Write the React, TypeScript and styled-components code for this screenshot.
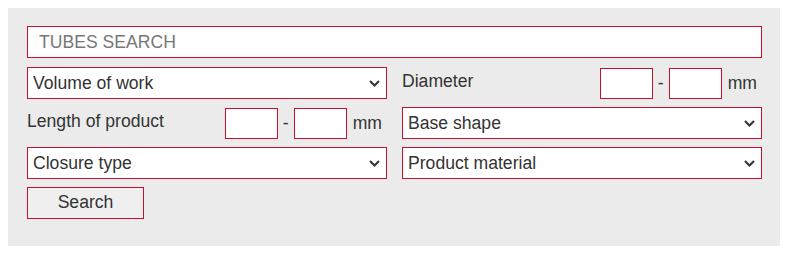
import React from "react";
import styled, { createGlobalStyle } from "styled-components";

const GlobalStyle = createGlobalStyle`
  body {
    margin: 8px;
    background: #ffffff;
    font-family: "Liberation Sans", Arial, sans-serif;
  }
  * { box-sizing: border-box; }
`;

const RED = "#c8102e";
const TEXT = "#333333";

const Panel = styled.form`
  width: 772px;
  height: 238px;
  background: #ebebeb;
  padding: 18px 18px 27px 19px;
  font-family: "Liberation Sans", Arial, sans-serif;
  font-size: 17.6px;
  color: ${TEXT};
`;

const SearchInput = styled.input`
  display: block;
  width: 735px;
  height: 32px;
  margin: 0 0 9px 0;
  padding: 0 11px;
  border: 1px solid ${RED};
  background: #fff;
  font: inherit;
  color: ${TEXT};
  outline: none;
  &::placeholder {
    color: #777777;
  }
`;

const Grid = styled.div`
  display: grid;
  grid-template-columns: 360px 360px;
  column-gap: 15px;
  row-gap: 8px;
`;

const SelectWrap = styled.div`
  position: relative;
  height: 32px;
`;

const Select = styled.select`
  appearance: none;
  -webkit-appearance: none;
  width: 100%;
  height: 100%;
  padding: 0 30px 1px 5px;
  border: 1px solid ${RED};
  border-radius: 0;
  background: #fff;
  font: inherit;
  color: ${TEXT};
  outline: none;
`;

const Chevron = styled.svg`
  position: absolute;
  right: 7px;
  top: 13px;
  pointer-events: none;
`;

const FieldRow = styled.div`
  display: flex;
  align-items: center;
  height: 32px;
`;

const Label = styled.span`
  flex: 1;
  margin-top: -3px;
  color: ${TEXT};
`;

const SmallInput = styled.input<{ $w: number }>`
  width: ${(p) => p.$w}px;
  height: 31px;
  padding: 0 4px;
  border: 1px solid ${RED};
  background: #fff;
  font: inherit;
  outline: none;
`;

const Dash = styled.span`
  width: 16px;
  text-align: center;
  color: ${TEXT};
`;

const Unit = styled.span`
  margin: 0 5px 0 6px;
  color: ${TEXT};
`;

const SubmitButton = styled.button`
  width: 117px;
  height: 32px;
  border: 1px solid ${RED};
  background: #efefef;
  font: inherit;
  color: ${TEXT};
  padding: 0 0 1px 0;
  cursor: pointer;
`;

function Dropdown({ label }: { label: string }) {
  return (
    <SelectWrap>
      <Select defaultValue="">
        <option value="">{label}</option>
      </Select>
      <Chevron width="11" height="7" viewBox="0 0 11 7">
        <polyline
          points="1,1 5.5,5.5 10,1"
          fill="none"
          stroke="#333"
          strokeWidth="2.1"
        />
      </Chevron>
    </SelectWrap>
  );
}

function Range({ label }: { label: string }) {
  return (
    <FieldRow>
      <Label>{label}</Label>
      <SmallInput $w={53} />
      <Dash>-</Dash>
      <SmallInput $w={53} />
      <Unit>mm</Unit>
    </FieldRow>
  );
}

export default function App() {
  return (
    <>
      <GlobalStyle />
      <Panel onSubmit={(e) => e.preventDefault()}>
        <SearchInput placeholder="TUBES SEARCH" />
        <Grid>
          <Dropdown label="Volume of work" />
          <Range label="Diameter" />
          <Range label="Length of product" />
          <Dropdown label="Base shape" />
          <Dropdown label="Closure type" />
          <Dropdown label="Product material" />
          <div>
            <SubmitButton type="submit">Search</SubmitButton>
          </div>
        </Grid>
      </Panel>
    </>
  );
}
